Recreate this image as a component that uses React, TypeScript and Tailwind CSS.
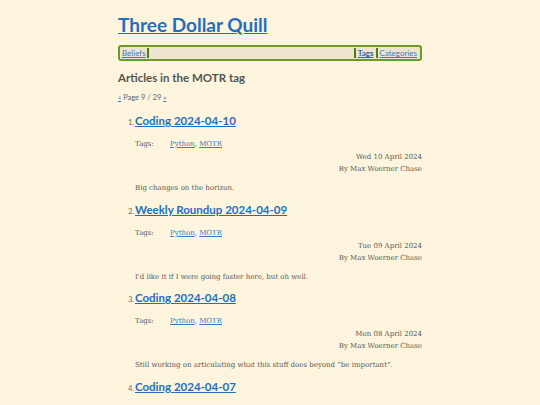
import React from 'react';

const posts = [
  { title: 'Coding 2024-04-10', date: 'Wed 10 April 2024', summary: 'Big changes on the horizon.' },
  { title: 'Weekly Roundup 2024-04-09', date: 'Tue 09 April 2024', summary: "I'd like it if I were going faster here, but oh well." },
  { title: 'Coding 2024-04-08', date: 'Mon 08 April 2024', summary: 'Still working on articulating what this stuff does beyond \u201cbe important\u201d.' },
  { title: 'Coding 2024-04-07', date: 'Sun 07 April 2024', summary: 'More of the same.' },
];

const sans = { fontFamily: 'Lato, "Open Sans", sans-serif' };
const serif = { fontFamily: '"DejaVu Serif", serif' };

export default function App() {
  return (
    <div className="h-[405px] overflow-hidden bg-[#fcf4dc] text-[#555]" style={sans}>
      <div className="mx-auto w-[304px] pt-[14px]">
        <h1 className="text-[19px] font-bold leading-[22px]">
          <a href="#" className="text-[#1f6fc1] underline">Three Dollar Quill</a>
        </h1>
        <nav className="mt-[9px] flex h-[16px] items-center rounded-[3px] border-2 border-[#6e9a22] bg-[#ece4d0] px-[1px] text-[8px] leading-none">
          <a href="#" className="px-[1px] text-[#3b7cc0] underline">Beliefs</a>
          <span className="h-[10px] w-[2px] bg-[#4f7d12]" />
          <span className="flex-1" />
          <span className="h-[10px] w-[2px] bg-[#4f7d12]" />
          <a href="#" className="px-[2px] font-bold text-[#2a6aa8] underline">Tags</a>
          <span className="h-[10px] w-[2px] bg-[#4f7d12]" />
          <a href="#" className="px-[2px] text-[#3b7cc0] underline">Categories</a>
        </nav>
        <h2 className="mt-[8px] text-[11.5px] font-bold leading-[18px] text-[#555]">Articles in the MOTR tag</h2>
        <p className="mt-[6px] text-[7.5px] leading-[10px] text-[#666]">
          <a href="#" className="text-[#3b7cc0] underline">«</a> Page 9 / 29 <a href="#" className="text-[#3b7cc0] underline">»</a>
        </p>
        <ol className="mt-[9px] pl-[17px]">
          {posts.map((p, i) => (
            <li key={i} className="h-[88.6px]">
              <div className="flex items-baseline">
                <span className="w-[7px] -ml-[8px] mr-[1px] text-right text-[7px] text-[#666]">{i + 1}.</span>
                <a href="#" className="text-[11.5px] font-bold leading-[18px] text-[#1f6fc1] underline">{p.title}</a>
              </div>
              <div className="text-[7px] text-[#5a5a5a]" style={serif}>
                <div className="mt-[9px] flex leading-[10px]">
                  <span className="w-[35px]">Tags:</span>
                  <span>
                    <a href="#" className="text-[#3b7cc0] underline">Python</a>,{' '}
                    <a href="#" className="text-[#3b7cc0] underline">MOTR</a>
                  </span>
                </div>
                <div className="mt-[2px] text-right leading-[12px]">{p.date}</div>
                <div className="text-right leading-[12px]">By Max Woerner Chase</div>
                <p className="mt-[7px] leading-[12px]">{p.summary}</p>
              </div>
            </li>
          ))}
        </ol>
      </div>
    </div>
  );
}
